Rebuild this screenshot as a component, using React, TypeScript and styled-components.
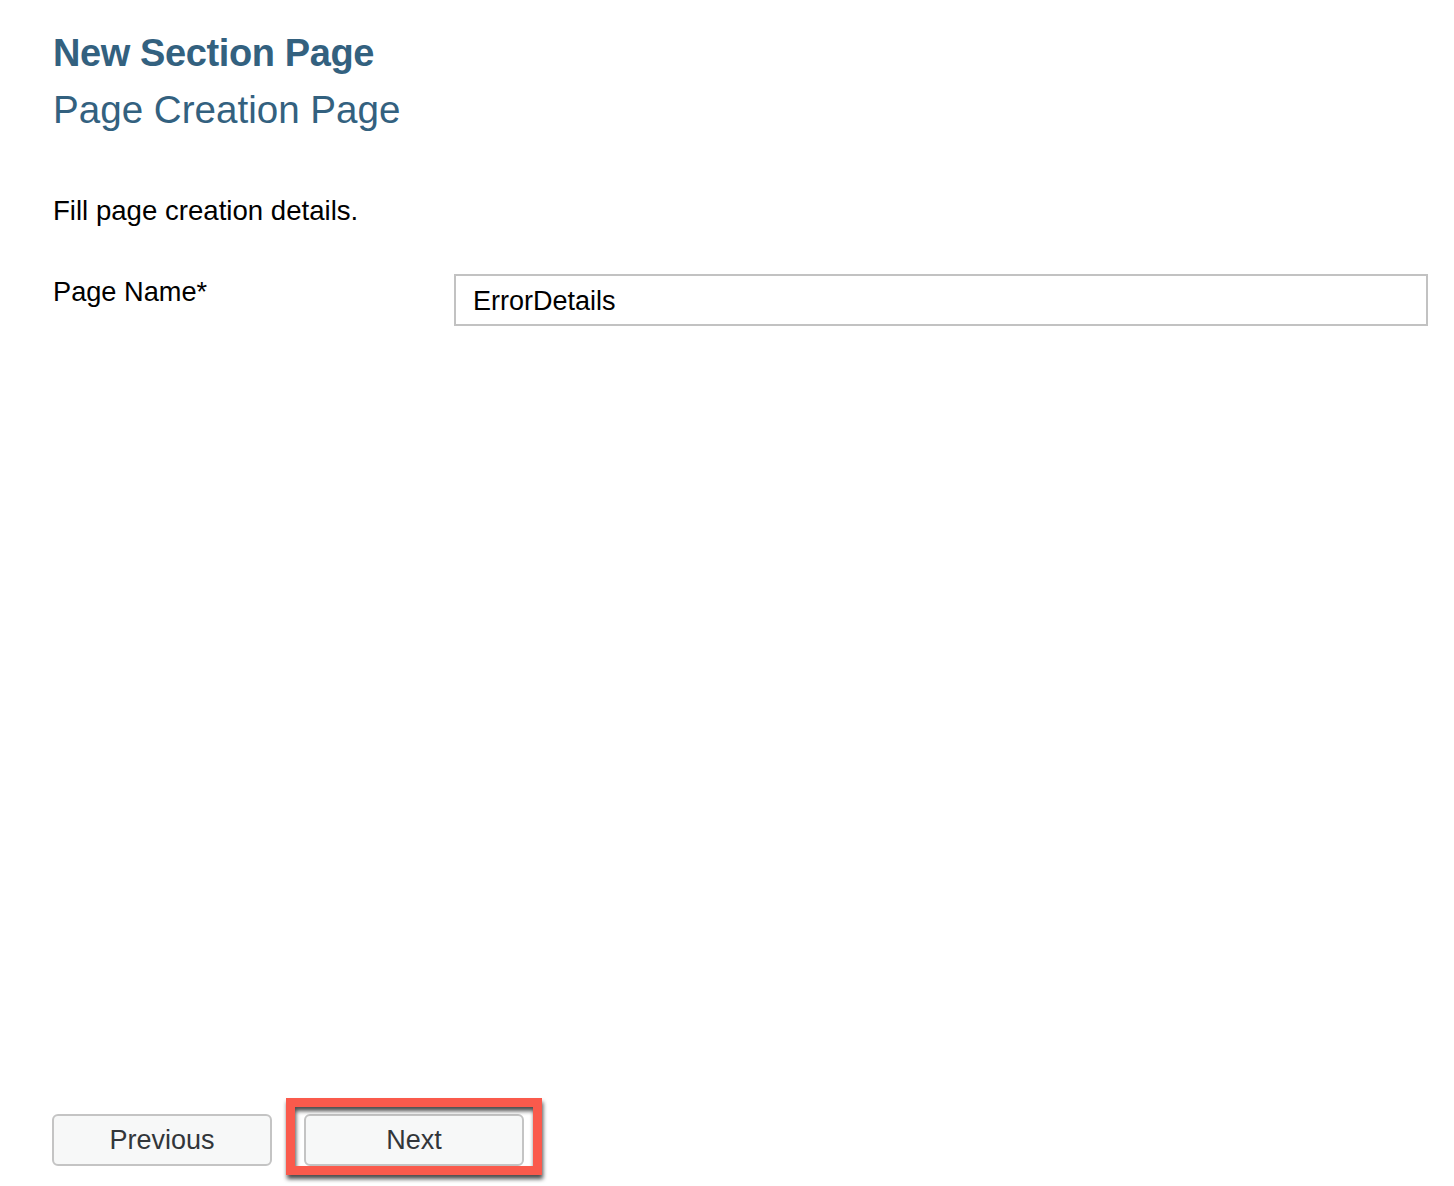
import React from "react";
import styled, { createGlobalStyle } from "styled-components";

const GlobalStyle = createGlobalStyle`
  html, body {
    margin: 0;
    padding: 0;
    background: #ffffff;
  }
  body {
    font-family: "Liberation Sans", Arial, sans-serif;
    color: #000000;
  }
  * { box-sizing: border-box; }
`;

const Page = styled.div`
  min-height: 100vh;
  display: flex;
  flex-direction: column;
  padding: 26px 26px 20px 53px;
`;

const Title = styled.h1<{ $bold?: boolean }>`
  margin: ${(p) => (p.$bold ? "0" : "3px 0 0")};
  font-size: ${(p) => (p.$bold ? "38px" : "38.6px")};
  line-height: 54px;
  font-weight: ${(p) => (p.$bold ? 700 : 400)};
  color: #33617f;
  letter-spacing: ${(p) => (p.$bold ? "-0.4px" : "0")};
`;

const Description = styled.p`
  margin: 56px 0 0;
  font-size: 27.6px;
  line-height: 36px;
`;

const FormRow = styled.div`
  margin-top: 45px;
  display: grid;
  grid-template-columns: 401px 1fr;
  align-items: start;
`;

const Label = styled.label`
  font-size: 27.2px;
  line-height: 36px;
`;

const TextInput = styled.input`
  width: 100%;
  height: 52px;
  border: 2px solid #c2c2c2;
  border-radius: 0;
  padding: 2px 17px 0;
  font-family: "Liberation Sans", Arial, sans-serif;
  font-size: 27px;
  color: #000000;
  background: #ffffff;
  outline: none;
`;

const Footer = styled.div`
  margin-top: auto;
  margin-left: -1px;
  display: flex;
  gap: 32px;
`;

const ButtonWrap = styled.div`
  position: relative;
`;

const Button = styled.button`
  width: 220px;
  height: 52px;
  border: 2px solid #c4c4c4;
  border-radius: 6px;
  background: #f7f8f8;
  color: #32363a;
  font-family: "Liberation Sans", Arial, sans-serif;
  font-size: 27px;
  padding: 0;
  cursor: pointer;
`;

const Highlight = styled.div`
  position: absolute;
  top: -16px;
  left: -18px;
  right: -18px;
  bottom: -9px;
  border: 9px solid #fa5a4c;
  filter: drop-shadow(1px 4px 2px rgba(0, 0, 0, 0.7));
  pointer-events: none;
`;

export default function App() {
  return (
    <>
      <GlobalStyle />
      <Page>
        <Title $bold>New Section Page</Title>
        <Title as="h2">Page Creation Page</Title>
        <Description>Fill page creation details.</Description>
        <FormRow>
          <Label htmlFor="pageName">Page Name*</Label>
          <TextInput id="pageName" defaultValue="ErrorDetails" />
        </FormRow>
        <Footer>
          <Button>Previous</Button>
          <ButtonWrap>
            <Button>Next</Button>
            <Highlight />
          </ButtonWrap>
        </Footer>
      </Page>
    </>
  );
}
